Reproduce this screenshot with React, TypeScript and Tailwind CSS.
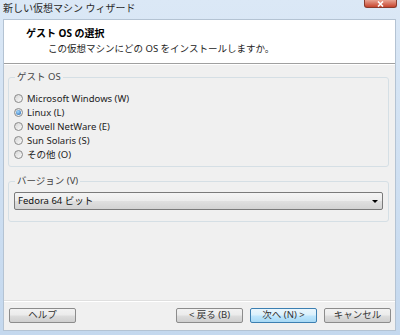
import React, { useState } from 'react';

const osList = [
  'Microsoft Windows (W)',
  'Linux (L)',
  'Novell NetWare (E)',
  'Sun Solaris (S)',
  'その他 (O)',
];

function Radio({ checked }: { checked: boolean }) {
  return (
    <span className="w-[9px] h-[9px] rounded-full border border-[#8a8a8a] bg-[linear-gradient(135deg,#d4d4d4,#fbfbfb)] flex items-center justify-center shrink-0">
      {checked && (
        <span className="w-[5px] h-[5px] rounded-full bg-[radial-gradient(circle_at_40%_35%,#a8dcff,#1b5fae)]" />
      )}
    </span>
  );
}

function WinButton({ label, primary }: { label: string; primary?: boolean }) {
  const skin = primary
    ? 'border-[#3c7fb1] bg-[linear-gradient(#eaf6fd_0%,#d9f0fc_48%,#bee6fd_52%,#a7d9f5_100%)]'
    : 'border-[#8c8c8c] bg-[linear-gradient(#f2f2f2_0%,#ebebeb_48%,#dddddd_52%,#cfcfcf_100%)]';
  return (
    <div className={`h-[15px] w-[67px] border rounded-[2px] flex items-center justify-center text-[#333] ${skin}`}>
      {label}
    </div>
  );
}

export default function App() {
  const [selected, setSelected] = useState(1);

  return (
    <div
      className="w-[400px] h-[335px] flex flex-col bg-[linear-gradient(#dbe8f6,#c4d8ee)] text-[9.5px] text-black"
      style={{ fontFamily: '"Noto Sans", "Noto Sans CJK JP", sans-serif' }}
    >
      {/* Title bar */}
      <div className="h-[19px] flex items-start justify-between">
        <span className="pl-[3px] pt-[1px] text-[10px] text-[#2a2a2a]">新しい仮想マシン ウィザード</span>
        <div className="mr-[3px] w-[33px] h-[8px] rounded-b-[3px] border border-t-0 border-[#8a3b2c] bg-[linear-gradient(#e8a393,#c7452e)] flex items-center justify-center">
          <svg width="7" height="6" viewBox="0 0 7 6">
            <path d="M1 0.5 L6 5.5 M6 0.5 L1 5.5" stroke="#fff" strokeWidth="1.6" />
          </svg>
        </div>
      </div>

      {/* Body */}
      <div className="flex-1 ml-[3px] mr-[4px] mb-[4px] bg-[#f0f0f0] border border-[#b4c3d3] flex flex-col">
        {/* Header */}
        <div className="h-[44px] bg-white border-b border-[#a0a0a0] shrink-0 pt-[6px]">
          <div className="pl-[22px] font-bold text-[10px]">ゲスト OS の選択</div>
          <div className="pl-[44px] mt-[1px] text-[#222]">この仮想マシンにどの OS をインストールしますか。</div>
        </div>
        <div className="h-px bg-white shrink-0" />

        {/* Guest OS group */}
        <fieldset className="mt-[5px] ml-[4px] mr-[6px] border border-[#d5dfe5] rounded-[3px] pl-[5px] pb-[4px] h-[97px]">
          <legend className="ml-[1px] px-[2px] text-[#444]">ゲスト OS</legend>
          <div className="mt-[9px] flex flex-col gap-[3px]">
            {osList.map((os, i) => (
              <div
                key={os}
                className="h-[11px] flex items-center gap-[4px] text-[#222] cursor-default"
                onClick={() => setSelected(i)}
              >
                <Radio checked={selected === i} />
                <span>{os}</span>
              </div>
            ))}
          </div>
        </fieldset>

        {/* Version group */}
        <fieldset className="mt-[7px] ml-[4px] mr-[6px] border border-[#d5dfe5] rounded-[3px] px-[5px] h-[48px]">
          <legend className="ml-[1px] px-[2px] text-[#444]">バージョン (V)</legend>
          <div className="mt-[4px] h-[18px] border border-[#7a7a7a] rounded-[2px] bg-[linear-gradient(#f4f4f4_0%,#ececec_48%,#dfdfdf_52%,#d3d3d3_100%)] flex items-center justify-between pl-[3px] pr-[4px]">
            <span className="text-[#111]">Fedora 64 ビット</span>
            <span className="w-0 h-0 border-l-[3px] border-r-[3px] border-t-[3px] border-l-transparent border-r-transparent border-t-black" />
          </div>
        </fieldset>

        <div className="flex-1" />

        {/* Footer */}
        <div className="border-t border-[#dfdfdf] shrink-0">
          <div className="border-t border-white h-[29px] flex items-start pt-[6px] pl-[5px] pr-[4px]">
            <WinButton label="ヘルプ" />
            <div className="flex-1" />
            <div className="flex gap-[7px]">
              <WinButton label="< 戻る (B)" />
              <WinButton label="次へ (N) >" primary />
              <WinButton label="キャンセル" />
            </div>
          </div>
        </div>
      </div>
    </div>
  );
}
